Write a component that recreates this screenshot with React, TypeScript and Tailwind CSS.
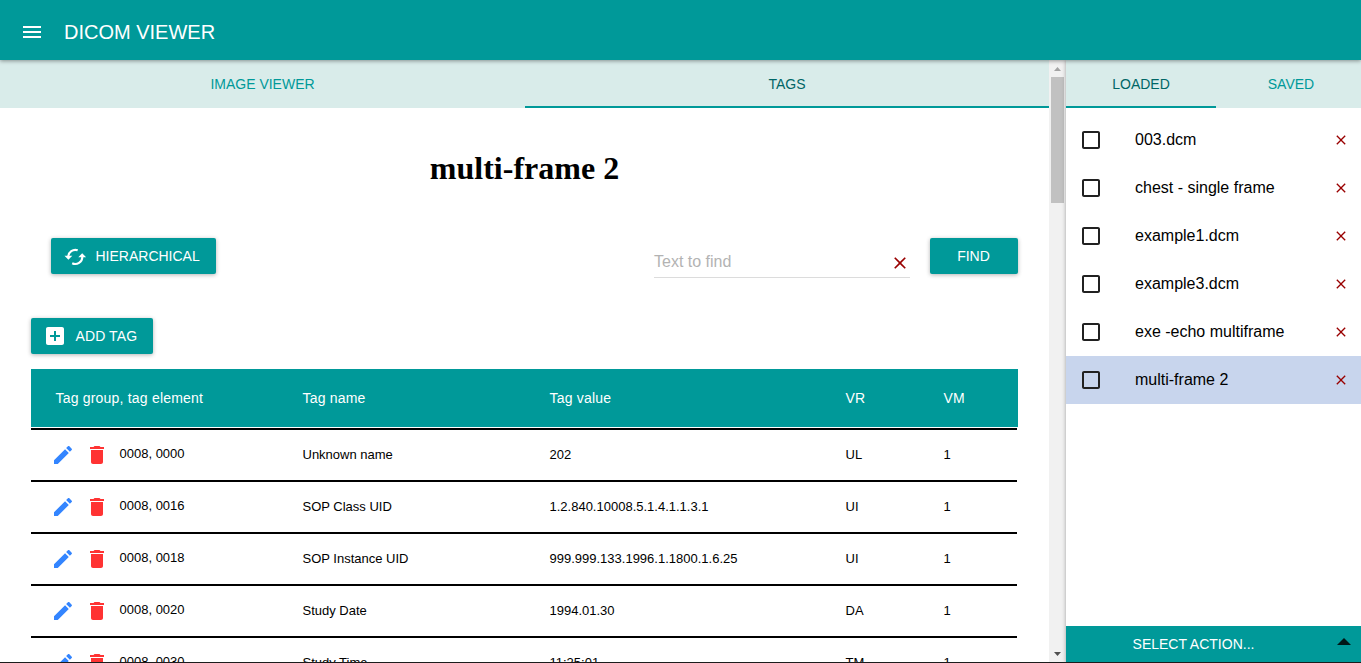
import type { ReactNode } from "react";

const icons = {
  menu: "M3 18h18v-2H3v2zm0-5h18v-2H3v2zm0-7v2h18V6H3z",
  addBox:
    "M19 3H5c-1.11 0-2 .9-2 2v14c0 1.1.89 2 2 2h14c1.1 0 2-.9 2-2V5c0-1.1-.9-2-2-2zm-2 10h-4v4h-2v-4H7v-2h4V7h2v4h4v2z",
  edit: "M3 17.25V21h3.75L17.81 9.94l-3.75-3.75L3 17.25zM20.71 7.04c.39-.39.39-1.02 0-1.41l-2.34-2.34c-.39-.39-1.02-.39-1.41 0l-1.83 1.83 3.75 3.75 1.83-1.83z",
  trash: "M6 19c0 1.1.9 2 2 2h8c1.1 0 2-.9 2-2V7H6v12zM19 4h-3.5l-1-1h-5l-1 1H5v2h14V4z",
  close:
    "M19 6.41L17.59 5 12 10.59 6.41 5 5 6.41 10.59 12 5 17.59 6.41 19 12 13.41 17.59 19 19 17.59 13.41 12z",
  checkbox:
    "M19 5v14H5V5h14m0-2H5c-1.1 0-2 .9-2 2v14c0 1.1.9 2 2 2h14c1.1 0 2-.9 2-2V5c0-1.1-.9-2-2-2z",
};

function Icon({ name, className = "size-6" }: { name: keyof typeof icons; className?: string }) {
  return (
    <svg viewBox="0 0 24 24" fill="currentColor" className={`shrink-0 ${className}`}>
      <path d={icons[name]} />
    </svg>
  );
}

function SyncIcon() {
  return (
    <svg viewBox="0 0 24 24" className="size-6 shrink-0" fill="currentColor">
      <g fill="none" stroke="currentColor" strokeWidth="2.1">
        <path d="M5.3 12.900A7 7 0 0 1 14.700 6.300" />
        <path d="M19.300 12.900A7 7 0 0 1 9.200 19.200" />
      </g>
      <path d="M1.500 11.700h7.800l-3.900 4zM23.100 13.200h-7.800l3.900-4z" />
    </svg>
  );
}

function Button({ children, className }: { children: ReactNode; className: string }) {
  return (
    <button
      className={`flex h-9 items-center rounded-[2px] bg-[#009999] text-sm text-white shadow-[0_1px_4px_rgba(0,0,0,0.3)] ${className}`}
    >
      {children}
    </button>
  );
}

function Tab({ label, active, className }: { label: string; active?: boolean; className: string }) {
  return (
    <div
      className={`flex h-12 shrink-0 items-center justify-center border-b-2 pt-0.5 text-sm ${
        active ? "border-[#009999] text-[#006666]" : "border-transparent text-[#009999]"
      } ${className}`}
    >
      {label}
    </div>
  );
}

const tags = [
  ["0008, 0000", "Unknown name", "202", "UL", "1"],
  ["0008, 0016", "SOP Class UID", "1.2.840.10008.5.1.4.1.1.3.1", "UI", "1"],
  ["0008, 0018", "SOP Instance UID", "999.999.133.1996.1.1800.1.6.25", "UI", "1"],
  ["0008, 0020", "Study Date", "1994.01.30", "DA", "1"],
  ["0008, 0030", "Study Time", "11:25:01", "TM", "1"],
];

const files = [
  "003.dcm",
  "chest - single frame",
  "example1.dcm",
  "example3.dcm",
  "exe -echo multiframe",
  "multi-frame 2",
];

const columns = "grid grid-cols-[247px_247px_296px_98px_98px] items-center";

export default function App() {
  return (
    <div className="flex h-[663px] w-[1361px] flex-col overflow-hidden bg-white font-['Liberation_Sans',Arial,sans-serif] text-black">
      <header className="relative z-10 flex h-15 shrink-0 items-center bg-[#009999] pt-1 pl-5 text-white shadow-[0_1px_4px_rgba(0,0,0,0.4)]">
        <Icon name="menu" />
        <h1 className="pl-5 text-xl">DICOM VIEWER</h1>
      </header>

      <div className="flex min-h-0 flex-1">
        <main className="w-[1049px] shrink-0 overflow-hidden">
          <div className="flex bg-[#d9ecea]">
            <Tab label="IMAGE VIEWER" className="w-[525px]" />
            <Tab label="TAGS" active className="w-[524px]" />
          </div>
          <h2 className="pt-[42px] text-center font-['Liberation_Serif',serif] text-[32px] leading-9 font-bold">
            multi-frame 2
          </h2>
          <div className="flex h-[132px] pt-[52px] pr-[31px] pl-[51px]">
            <Button className="w-[165px] pl-3">
              <SyncIcon />
              <span className="pl-[8.5px]">HIERARCHICAL</span>
            </Button>
            <div className="ml-auto flex h-10 w-64 items-center justify-between border-b border-[#dcdcdc] pt-2 text-base text-[#b3b3b3]">
              <span>Text to find</span>
              <Icon name="close" className="mt-0.5 size-5 text-[#990000]" />
            </div>
            <Button className="ml-5 w-[88px] justify-center pr-px">FIND</Button>
          </div>
          <div className="pl-[31px]">
            <Button className="w-[122px] pl-3">
              <Icon name="addBox" />
              <span className="pl-[8.5px] tracking-[0.1px]">ADD TAG</span>
            </Button>
            <div className="mt-[15px] w-[987px]">
              <div className={`${columns} mb-px h-[58px] bg-[#009999] text-sm tracking-[0.2px] text-white`}>
                {["Tag group, tag element", "Tag name", "Tag value", "VR", "VM"].map((h) => (
                  <span key={h} className="pl-[24.5px]">
                    {h}
                  </span>
                ))}
              </div>
              {tags.map(([id, name, value, vr, vm]) => (
                <div key={id} className={`${columns} h-13 w-[986px] border-t-2 border-black text-[13px]`}>
                  <div className="flex items-center pl-5">
                    <Icon name="edit" className="size-6 text-[#3385ff]" />
                    <Icon name="trash" className="ml-2.5 size-6 text-[#ff3333]" />
                    <span className="pb-0.5 pl-[10.5px]">{id}</span>
                  </div>
                  <span className="pl-[24.5px]">{name}</span>
                  <span className="pl-[24.5px]">{value}</span>
                  <span className="pl-[24.5px]">{vr}</span>
                  <span className="pl-[24.5px]">{vm}</span>
                </div>
              ))}
            </div>
          </div>
        </main>

        <div className="flex w-[17px] shrink-0 flex-col items-center bg-[#f1f1f1] pr-[1px]">
          <svg viewBox="0 0 17 17" className="size-[17px] shrink-0" fill="#a3a3a3">
            <path d="M5 11h7L8.500 7z" />
          </svg>
          <div className="h-[126px] w-[13px] shrink-0 bg-[#c1c1c1]" />
          <svg viewBox="0 0 17 17" className="mt-auto size-[17px] shrink-0" fill="#505050">
            <path d="M5 6h7L8.500 10z" />
          </svg>
        </div>

        <aside className="flex w-[295px] shrink-0 flex-col bg-white shadow-[0_0_4px_rgba(0,0,0,0.35)]">
          <div className="flex overflow-hidden bg-[#d9ecea]">
            <Tab label="LOADED" active className="w-[150px]" />
            <Tab label="SAVED" className="w-[150px]" />
          </div>
          <ul className="pt-2">
            {files.map((file) => (
              <li
                key={file}
                className={`flex h-12 items-center pr-3 pl-[13px] ${file === "multi-frame 2" ? "bg-[#c8d5ed]" : ""}`}
              >
                <Icon name="checkbox" className="size-6 text-[#212121]" />
                <span className="flex-1 pb-px pl-8 text-base">{file}</span>
                <Icon name="close" className="size-4 text-[#990000]" />
              </li>
            ))}
          </ul>
          <div className="mt-auto mb-px flex h-9 bg-[#009999] text-sm text-white">
            <button className="w-[255px]">SELECT ACTION...</button>
            <button className="flex flex-1 items-center pb-[5px] pl-4">
              <svg viewBox="0 0 14 7" className="h-[7px] w-3.5" fill="#001717">
                <path d="M0 7h14L7 0z" />
              </svg>
            </button>
          </div>
        </aside>
      </div>
      <div className="relative -mt-px h-px shrink-0 bg-[#1c1c1c]" />
    </div>
  );
}
